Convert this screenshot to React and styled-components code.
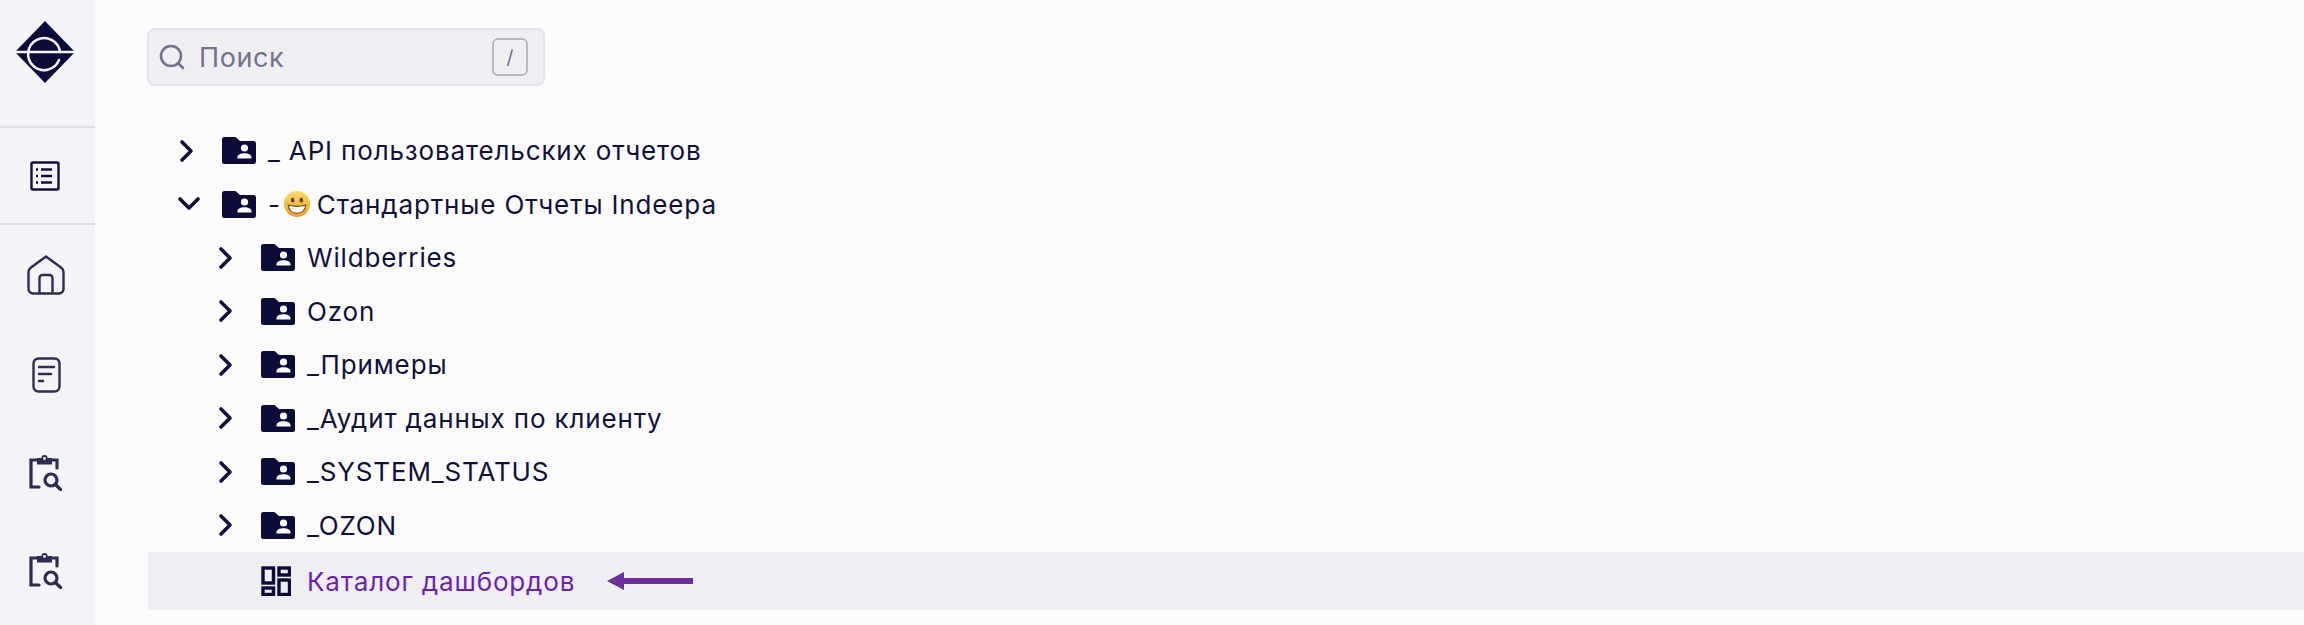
import React from "react";
import styled, { createGlobalStyle } from "styled-components";

const GlobalStyle = createGlobalStyle`
  html, body { margin: 0; padding: 0; height: 100%; overflow: hidden; }
  body { font-family: Inter, "Noto Sans", sans-serif; background: #fbfbfc; }
`;

const Page = styled.div`
  display: flex;
  width: 100%;
  height: 625px;
  overflow: hidden;
  background: #fbfbfc;
`;

const Sidebar = styled.aside`
  display: flex;
  flex-direction: column;
  flex: 0 0 95px;
  background: #f3f3f8;
`;

const LogoBox = styled.div`
  display: flex;
  justify-content: center;
  align-items: flex-start;
  height: 128px;
  padding: 21px 5px 0 0;
  box-sizing: border-box;
  border-bottom: 2px solid #dfdfe6;
`;

const MenuBox = styled.div`
  display: flex;
  justify-content: center;
  align-items: center;
  height: 97px;
  padding-right: 5px;
  box-sizing: border-box;
  border-bottom: 2px solid #dfdfe6;
`;

const NavList = styled.div`
  display: flex;
  flex-direction: column;
  align-items: center;
  gap: 62px;
  padding: 30px 3px 0 0;
  color: #2c2c54;
`;

const Main = styled.main`
  flex: 1;
  min-width: 0;
  padding-top: 28px;
`;

const SearchBox = styled.div`
  display: flex;
  align-items: center;
  width: 398px;
  height: 58px;
  margin-left: 52px;
  padding: 0 15px 0 10px;
  box-sizing: border-box;
  background: #eeeef3;
  border: 2px solid #e3e3e9;
  border-radius: 8px;
  color: #73738c;
`;

const SearchText = styled.span`
  flex: 1;
  margin-left: 14px;
  font-size: 27px;
  letter-spacing: 0.6px;
`;

const KeyHint = styled.span`
  display: flex;
  align-items: center;
  justify-content: center;
  width: 36px;
  height: 38px;
  box-sizing: border-box;
  border: 2px solid #b9b9c6;
  border-radius: 6px;
  font-size: 19px;
  color: #6e6e85;
`;

const Tree = styled.div`
  display: flex;
  flex-direction: column;
  margin-top: 38px;
`;

const Row = styled.div`
  display: flex;
  align-items: center;
  height: ${(p) => (p.$active ? "58px" : "53.5px")};
  margin-left: 53px;
  padding-left: ${(p) => p.$level * 39 + 31}px;
  background: ${(p) => (p.$active ? "#eeeef3" : "transparent")};
  color: ${(p) => (p.$active ? "#6a1fb8" : "#10103c")};
`;

const ChevronSlot = styled.span`
  display: flex;
  justify-content: center;
  flex: 0 0 16px;
  width: 16px;
  margin-right: 27px;
  color: #10103c;
`;

const IconSlot = styled.span`
  display: flex;
  flex: 0 0 34px;
  margin-right: 12px;
  color: #0c0c3a;
`;

const Label = styled.span`
  display: flex;
  align-items: center;
  font-size: 26px;
  letter-spacing: 0.85px;
  white-space: pre;
`;

const Arrow = styled.svg`
  margin-left: 32px;
  flex: none;
`;

const EmojiIcon = styled.svg`
  margin: 0 7px 0 3px;
  flex: none;
`;

const ChevronIcon = styled.svg`
  flex: none;
  margin-left: ${(p) => (p.$open ? "3px" : "0")};
`;

const Chevron = ({ open }) => (
  <ChevronIcon $open={open} width={open ? 24 : 16} height={open ? 16 : 24} viewBox={open ? "0 0 24 16" : "0 0 16 24"} fill="none" stroke="currentColor" strokeWidth="3.6" strokeLinecap="round" strokeLinejoin="round">
    <path d={open ? "M3 3l9 9 9-9" : "M3 3l9 9-9 9"} />
  </ChevronIcon>
);

const Folder = () => (
  <svg width="34" height="27" viewBox="0 0 34 27">
    <path fill="currentColor" d="M2.500 0h10.200c.8 0 1.500.3 2 .9L18 4h13.500A2.500 2.500 0 0 1 34 6.500v18a2.500 2.500 0 0 1-2.500 2.500h-29A2.500 2.500 0 0 1 0 24.500v-22A2.500 2.500 0 0 1 2.500 0z" />
    <circle cx="22.500" cy="11" r="3.600" fill="#fbfbfc" />
    <path fill="#fbfbfc" d="M15.500 21.500v-1.300c0-2.600 3.500-4 7-4s7 1.400 7 4v1.300z" />
  </svg>
);

const Grid = () => (
  <svg width="30" height="30" viewBox="0 0 30 30" fill="none" stroke="currentColor" strokeWidth="3.400">
    <rect x="2" y="2" width="10.500" height="15" />
    <rect x="18" y="2" width="10.500" height="7" />
    <rect x="2" y="22" width="10.500" height="6.500" />
    <rect x="18" y="14" width="10.500" height="14.500" />
  </svg>
);

const Smile = () => (
  <EmojiIcon width="26" height="26" viewBox="0 0 24 24">
    <defs>
      <linearGradient id="sm" x1="0" y1="0" x2="0" y2="1">
        <stop offset="0" stopColor="#fbdc62" />
        <stop offset="1" stopColor="#ee9f2b" />
      </linearGradient>
    </defs>
    <circle cx="12" cy="12" r="12" fill="url(#sm)" />
    <ellipse cx="8" cy="8.500" rx="1.600" ry="2.200" fill="#5a3a12" />
    <ellipse cx="16" cy="8.500" rx="1.600" ry="2.200" fill="#5a3a12" />
    <path d="M4 13c5 1.500 11 1.500 16 0-.4 5-4 7.500-8 7.500S4.400 18 4 13z" fill="#fff" stroke="#6a4213" strokeWidth="1" />
  </EmojiIcon>
);

const Logo = () => (
  <svg width="62" height="62" viewBox="0 0 62 62">
    <path fill="#0c0c3a" d="M31 0l30 31-30 31L1 31z" />
    <path fill="none" stroke="#f3f3f8" strokeWidth="2.500" d="M0 31h62" />
    <path fill="none" stroke="#f3f3f8" strokeWidth="2.500" strokeLinecap="round" d="M45 39a16 16 0 1 1 1-8" />
  </svg>
);

const ListIcon = () => (
  <svg width="30" height="30" viewBox="0 0 30 30" fill="none" stroke="#10103c" strokeWidth="2.400">
    <rect x="1.500" y="1.500" width="27" height="27" rx="1.500" />
    <path strokeWidth="2.600" d="M11 8.500h11M11 15h11M11 21.500h11M6 8.500h2M6 15h2M6 21.500h2" />
  </svg>
);

const HomeIcon = () => (
  <svg width="38" height="40" viewBox="0 0 38 40" fill="none" stroke="currentColor" strokeWidth="2.400" strokeLinejoin="round">
    <path d="M19 1.500L34 12.500c1.500 1.100 2.500 2.500 2.500 4.500V34a4.500 4.500 0 0 1-4.500 4.500H6A4.500 4.500 0 0 1 1.500 34V17c0-2 1-3.400 2.500-4.500z" />
    <path d="M12.500 38.500V23a3 3 0 0 1 3-3h7a3 3 0 0 1 3 3v15.500" />
  </svg>
);

const ReportIcon = () => (
  <svg width="29" height="36" viewBox="0 0 29 36" fill="none" stroke="currentColor" strokeWidth="2.400" strokeLinecap="round">
    <rect x="1.500" y="1.500" width="26" height="33" rx="5" />
    <path d="M7 10h15M7 17h12M7 24h4" />
  </svg>
);

const ClipboardSearch = () => (
  <svg width="34" height="36" viewBox="0 0 34 36" fill="none" stroke="currentColor" strokeWidth="3.200" strokeLinecap="round">
    <path d="M8 5H2v27h8M22 5h6v8" />
    <path fill="currentColor" stroke="none" d="M8 3h4.500a3 3 0 0 1 6 0H23v6.500H8z" />
    <circle cx="15.500" cy="3.500" r="1.400" fill="#f3f3f8" stroke="none" />
    <circle cx="22" cy="25" r="6" />
    <path d="M27 30l4.500 4.500" />
  </svg>
);

const SearchIcon = () => (
  <svg width="26" height="26" viewBox="0 0 26 26" fill="none" stroke="currentColor" strokeWidth="2.600" strokeLinecap="round">
    <circle cx="12" cy="12" r="10" />
    <path d="M20 20l4 4" />
  </svg>
);

const rows = [
  { level: 0, label: "_ API пользовательских отчетов" },
  { level: 0, open: true, label: "-", emoji: true, tail: "Стандартные Отчеты Indeepa" },
  { level: 1, label: "Wildberries" },
  { level: 1, label: "Ozon" },
  { level: 1, label: "_Примеры" },
  { level: 1, label: "_Аудит данных по клиенту" },
  { level: 1, label: "_SYSTEM_STATUS" },
  { level: 1, label: "_OZON" },
];

const App = () => (
  <Page>
    <GlobalStyle />
    <Sidebar>
      <LogoBox><Logo /></LogoBox>
      <MenuBox><ListIcon /></MenuBox>
      <NavList>
        <HomeIcon />
        <ReportIcon />
        <ClipboardSearch />
        <ClipboardSearch />
      </NavList>
    </Sidebar>
    <Main>
      <SearchBox>
        <SearchIcon />
        <SearchText>Поиск</SearchText>
        <KeyHint>/</KeyHint>
      </SearchBox>
      <Tree>
        {rows.map((r) => (
          <Row key={r.label} $level={r.level}>
            <ChevronSlot><Chevron open={r.open} /></ChevronSlot>
            <IconSlot><Folder /></IconSlot>
            <Label>{r.label}{r.emoji && <Smile />}{r.tail}</Label>
          </Row>
        ))}
        <Row $level={1} $active>
          <ChevronSlot />
          <IconSlot><Grid /></IconSlot>
          <Label>Каталог дашбордов</Label>
          <Arrow width="86" height="18" viewBox="0 0 86 18">
            <path fill="#6d2f9e" d="M0 9L17 0v6h69v6H17v6z" />
          </Arrow>
        </Row>
      </Tree>
    </Main>
  </Page>
);

export default App;
